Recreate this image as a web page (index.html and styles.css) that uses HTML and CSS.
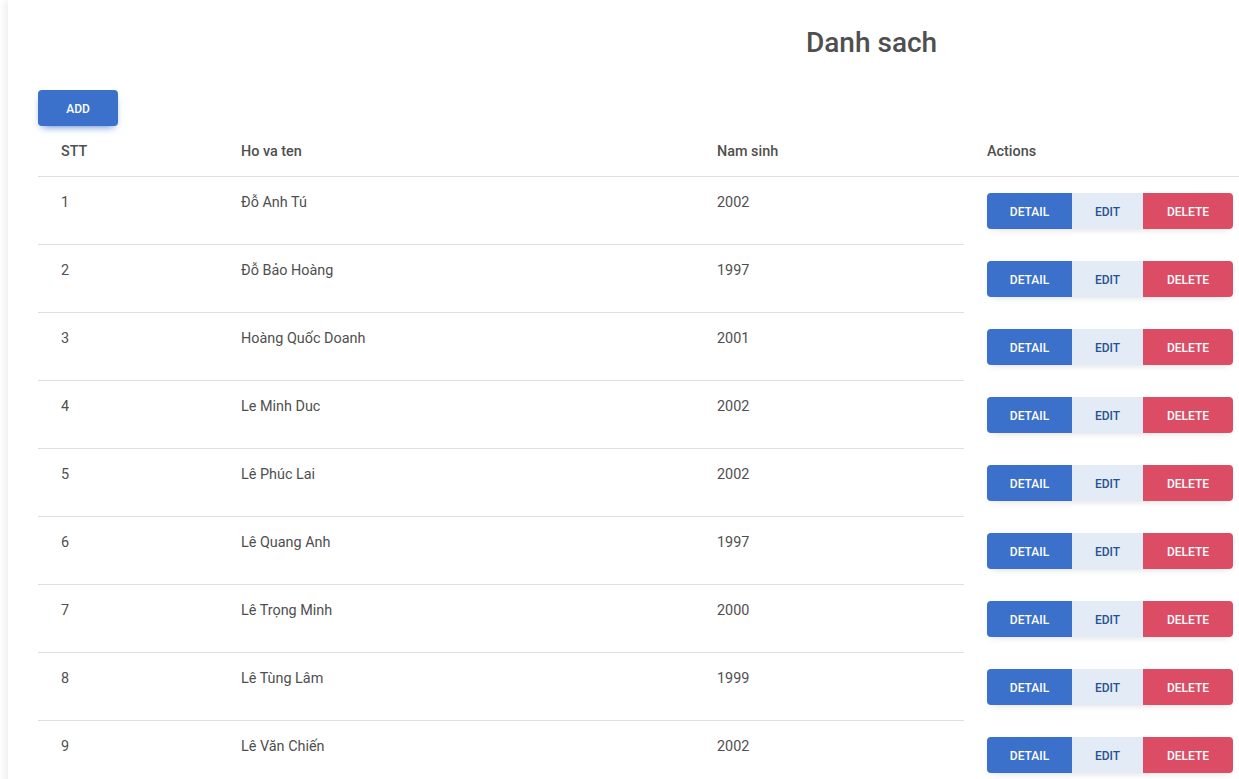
FILE: index.html
```html
<!DOCTYPE html>
<html lang="vi">
<head>
<meta charset="utf-8">
<title>Danh sach</title>
<link rel="stylesheet" href="styles.css">
</head>
<body>
<div class="page">
  <h1 class="title">Danh sach</h1>
  <button class="btn btn-primary btn-add">ADD</button>
  <table class="table">
    <colgroup>
      <col class="c-stt"><col class="c-name"><col class="c-year"><col class="c-act">
    </colgroup>
    <thead>
      <tr><th>STT</th><th>Ho va ten</th><th>Nam sinh</th><th>Actions</th></tr>
    </thead>
    <tbody>
      <tr><td>1</td><td>Đỗ Anh Tú</td><td>2002</td><td class="act"><div class="group"><button class="btn b-detail">DETAIL</button><button class="btn b-edit">EDIT</button><button class="btn b-delete">DELETE</button></div></td></tr>
      <tr><td>2</td><td>Đỗ Bảo Hoàng</td><td>1997</td><td class="act"><div class="group"><button class="btn b-detail">DETAIL</button><button class="btn b-edit">EDIT</button><button class="btn b-delete">DELETE</button></div></td></tr>
      <tr><td>3</td><td>Hoàng Quốc Doanh</td><td>2001</td><td class="act"><div class="group"><button class="btn b-detail">DETAIL</button><button class="btn b-edit">EDIT</button><button class="btn b-delete">DELETE</button></div></td></tr>
      <tr><td>4</td><td>Le Minh Duc</td><td>2002</td><td class="act"><div class="group"><button class="btn b-detail">DETAIL</button><button class="btn b-edit">EDIT</button><button class="btn b-delete">DELETE</button></div></td></tr>
      <tr><td>5</td><td>Lê Phúc Lai</td><td>2002</td><td class="act"><div class="group"><button class="btn b-detail">DETAIL</button><button class="btn b-edit">EDIT</button><button class="btn b-delete">DELETE</button></div></td></tr>
      <tr><td>6</td><td>Lê Quang Anh</td><td>1997</td><td class="act"><div class="group"><button class="btn b-detail">DETAIL</button><button class="btn b-edit">EDIT</button><button class="btn b-delete">DELETE</button></div></td></tr>
      <tr><td>7</td><td>Lê Trọng Minh</td><td>2000</td><td class="act"><div class="group"><button class="btn b-detail">DETAIL</button><button class="btn b-edit">EDIT</button><button class="btn b-delete">DELETE</button></div></td></tr>
      <tr><td>8</td><td>Lê Tùng Lâm</td><td>1999</td><td class="act"><div class="group"><button class="btn b-detail">DETAIL</button><button class="btn b-edit">EDIT</button><button class="btn b-delete">DELETE</button></div></td></tr>
      <tr><td>9</td><td>Lê Văn Chiến</td><td>2002</td><td class="act"><div class="group"><button class="btn b-detail">DETAIL</button><button class="btn b-edit">EDIT</button><button class="btn b-delete">DELETE</button></div></td></tr>
    </tbody>
  </table>
</div>
</body>
</html>
```

FILE: styles.css
```css
html, body {
  margin: 0;
  padding: 0;
  overflow: hidden;
  background: #ffffff;
}

body {
  font-family: Roboto, "Noto Sans", sans-serif;
  color: #4f4f4f;
  font-size: 14.4px;
}

.page {
  margin-left: 8px;
  padding-left: 30px;
  min-height: 100vh;
  background: #ffffff;
  box-shadow: -3px 0 8px rgba(0, 0, 0, 0.07);
}

.title {
  margin: 0;
  padding: 26px 0 30px 768px;
  font-size: 28px;
  line-height: 34px;
  font-weight: 500;
  color: #4f4f4f;
  white-space: nowrap;
}

.btn {
  font-family: Roboto, "Noto Sans", sans-serif;
  font-size: 12px;
  font-weight: 500;
  text-transform: uppercase;
  border: 0;
  height: 36px;
  padding: 2px 0 0;
  line-height: 34px;
  text-align: center;
  cursor: pointer;
}

.btn-primary {
  background: #3b71ca;
  color: #ffffff;
}

.btn-add {
  display: block;
  width: 80px;
  border-radius: 4px;
  box-shadow: 0 4px 9px -4px #3b71ca;
}

.table {
  border-collapse: separate;
  border-spacing: 0;
  table-layout: fixed;
  width: 1217px;
}

.c-stt { width: 180px; }
.c-name { width: 476px; }
.c-year { width: 270px; }
.c-act { width: 291px; }

.table th {
  text-align: left;
  font-weight: 500;
  padding: 16px 23px 14px;
  line-height: 20px;
  border-bottom: 1px solid #e0e0e0;
  color: #4f4f4f;
}

.table td {
  vertical-align: top;
  padding: 16px 23px 0;
  line-height: 20px;
  border-bottom: 1px solid #e0e0e0;
  white-space: nowrap;
}

.table td.act {
  padding: 16px 0 15px 23px;
  border-bottom: 1px solid transparent;
}

.group {
  display: flex;
  border-radius: 4px;
  overflow: hidden;
  width: max-content;
  box-shadow: 0 3px 8px -4px rgba(0, 0, 0, 0.2);
}

.b-detail {
  width: 85px;
  background: #3b71ca;
  color: #ffffff;
}

.b-edit {
  width: 71px;
  background: #e3ebf7;
  color: #285192;
}

.b-delete {
  width: 90px;
  background: #dc4c64;
  color: #ffffff;
}
```
